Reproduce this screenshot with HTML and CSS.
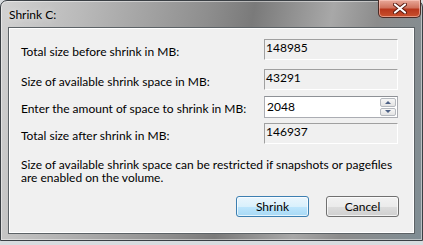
FILE: index.html
```html
<!DOCTYPE html>
<html lang="en">
<head>
    <meta charset="UTF-8">
    <title>Shrink C:</title>
    <link rel="stylesheet" href="styles.css">
</head>
<body>
    <div class="window">
        <div class="titlebar">
            <span class="title">Shrink C:</span>
            <button class="close" title="Close">
                <svg width="14" height="11" viewBox="0 0 14 11">
                    <path d="M2 1.5 L12 9.5 M12 1.5 L2 9.5" stroke="#5a1a10" stroke-width="4" stroke-linecap="round"/>
                    <path d="M2 1.5 L12 9.5 M12 1.5 L2 9.5" stroke="#ffffff" stroke-width="2.2" stroke-linecap="round"/>
                </svg>
            </button>
        </div>

        <div class="client">
            <div class="fields">
                <div class="field">
                    <label>Total size before shrink in MB:</label>
                    <div class="value">148985</div>
                </div>
                <div class="field">
                    <label>Size of available shrink space in MB:</label>
                    <div class="value">43291</div>
                </div>
                <div class="field">
                    <label>Enter the amount of space to shrink in MB:</label>
                    <div class="spin">
                        <input type="text" value="2048">
                        <div class="spin-buttons">
                            <span class="spin-btn up"></span>
                            <span class="spin-btn down"></span>
                        </div>
                    </div>
                </div>
                <div class="field">
                    <label>Total size after shrink in MB:</label>
                    <div class="value">146937</div>
                </div>
            </div>

            <p class="note">Size of available shrink space can be restricted if snapshots or pagefiles are enabled on the volume.</p>

            <div class="buttons">
                <button class="btn default">Shrink</button>
                <button class="btn">Cancel</button>
            </div>
        </div>
    </div>
</body>
</html>
```

FILE: styles.css
```css
body {
    margin: 0;
    background: #d8dcdf;
    font-family: Lato, "Liberation Sans", sans-serif;
    font-size: 12px;
    color: #000;
}
.window {
    width: 423px;
    height: 241px;
    box-sizing: border-box;
    border: 1px solid #3a3f44;
    border-radius: 7px 7px 0 0;
    background: linear-gradient(100deg, #d2d2d2 0%, #b9b9b9 18%, #8e8e8e 45%, #7a7a7a 55%, #a8a8a8 72%, #8c8c8c 82%, #7f8d94 100%);
    padding: 0 7px 6px 7px;
    display: flex;
    flex-direction: column;
    box-shadow: inset 0 0 0 1px rgba(255,255,255,0.45);
}
.titlebar {
    height: 26px;
    display: flex;
    align-items: flex-start;
    justify-content: space-between;
}
.title {
    margin: 6px 0 0 1px;
    text-shadow: 0 0 6px rgba(255,255,255,0.8);
}
.close {
    width: 43px;
    height: 18px;
    margin: -1px -6px 0 0;
    padding: 0;
    border: 1px solid #4b2a25;
    border-top: none;
    border-radius: 0 0 5px 5px;
    background: linear-gradient(#e9a99a 0%, #d0735e 45%, #b8361c 55%, #c9522e 100%);
    box-shadow: inset 0 0 0 1px rgba(255,210,200,0.55);
    display: flex;
    align-items: center;
    justify-content: center;
}
.client {
    flex: 1;
    background: #f0f0f0;
    border: 1px solid #5c6266;
    box-shadow: inset 0 0 0 1px #ffffff;
    padding: 11px 15px 0 12px;
}
.fields {
    display: flex;
    flex-direction: column;
    gap: 6px;
}
.field {
    display: flex;
    align-items: flex-start;
    height: 21px;
}
.field:first-child {
    margin-bottom: 3px;
}
.field label {
    width: 243px;
    padding-top: 5px;
}
.value {
    width: 134px;
    height: 21px;
    box-sizing: border-box;
    border: 1px solid;
    border-color: #a0a0a0 #ffffff #ffffff #a0a0a0;
    box-shadow: inset 1px 1px 0 #f0f0f0;
    padding: 0 0 0 1px;
    line-height: 16px;
}
.spin {
    width: 134px;
    height: 22px;
    box-sizing: border-box;
    border: 1px solid #abadb3;
    border-top-color: #8e9196;
    background: #fff;
    display: flex;
}
.spin input {
    flex: 1;
    min-width: 0;
    border: none;
    outline: none;
    padding: 0 0 2px 2px;
    font: inherit;
    background: transparent;
}
.spin-buttons {
    width: 16px;
    display: flex;
    flex-direction: column;
    gap: 1px;
    padding: 1px 1px 1px 0;
}
.spin-btn {
    flex: 1;
    border: 1px solid #b5b9bf;
    border-radius: 2px;
    background: linear-gradient(#f7f7f7, #e3e3e3);
    display: flex;
    align-items: center;
    justify-content: center;
}
.spin-btn::after {
    content: "";
    border-left: 3px solid transparent;
    border-right: 3px solid transparent;
}
.spin-btn.up::after {
    border-bottom: 3px solid #4d6185;
}
.spin-btn.down::after {
    border-top: 3px solid #4d6185;
}
.note {
    margin: 14px 0 0 0;
    line-height: 13px;
}
.buttons {
    display: flex;
    justify-content: flex-end;
    gap: 17px;
    margin-top: 12px;
}
.btn {
    width: 73px;
    height: 21px;
    padding: 0;
    font: inherit;
    color: #000;
    border: 1px solid #707070;
    border-radius: 3px;
    background: linear-gradient(#f2f2f2 0%, #ebebeb 50%, #dddddd 50%, #cfcfcf 100%);
    box-shadow: inset 0 0 0 1px rgba(255,255,255,0.7);
}
.btn.default {
    border-color: #3c7fb1;
    background: linear-gradient(#eaf6fd 0%, #d9f0fc 50%, #bee6fd 50%, #a7d9f5 100%);
}
```
